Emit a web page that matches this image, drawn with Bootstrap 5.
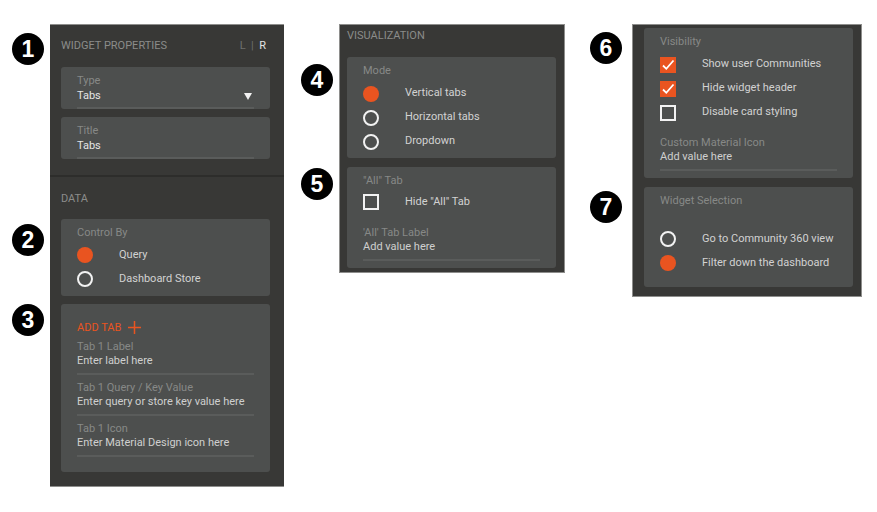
<!DOCTYPE html>
<html lang="en">
<head>
  <meta charset="UTF-8">
  <title>Tabs widget properties</title>
  <link href="https://cdn.jsdelivr.net/npm/bootstrap@5.3.0/dist/css/bootstrap.min.css" rel="stylesheet">
  <style>
    body {
      background: #fff;
      font-family: Roboto, "Liberation Sans", sans-serif;
      font-size: 11px;
      line-height: 14px;
    }
    .sheet {
      padding: 24px 0 0 50px;
    }
    .side-panel {
      background: #383836;
      box-shadow: inset 0 0 0 1px #8e8e8c;
      flex: none;
    }
    .panel-one {
      width: 234px;
      padding: 15px 14px 15px 11px;
      margin-right: 55px;
      box-shadow: inset 0 1px 0 #8e8e8c, inset 0 -1px 0 #8e8e8c;
    }
    .panel-two { width: 226px; padding: 5px 9px 5px 8px; margin-right: 67px; }
    .panel-three { width: 230px; padding: 4px 9px 10px 12px; }
    .panel-head {
      color: #8b8c8a;
      margin-bottom: 14px;
    }
    .data-head { margin-bottom: 13px; }
    .side-switch { color: #6f706e; padding-right: 4px; }
    .side-switch b { color: #e2e2e2; font-weight: 400; }
    .panel-rule {
      height: 2px;
      background: #2d2d2b;
      margin: 16px -14px 15px -11px;
    }
    .prop-card {
      position: relative;
      background: #4d4f4e;
      border-radius: 3px;
      padding: 7px 16px;
      margin-bottom: 9px;
    }
    .prop-card:last-child { margin-bottom: 0; }
    .tight { padding-bottom: 0; margin-bottom: 8px; }
    .control-card { padding-bottom: 5px; margin-bottom: 8px; }
    .mode-card { padding-bottom: 5px; }
    .tabs-card { padding-bottom: 15px; }
    .select-card { padding-bottom: 12px; }
    .prop-label { color: #878987; }
    .prop-value { color: #cfcfcf; }
    .prop-field {
      border-bottom: 2px solid #5a5c5b;
      padding-bottom: 5px;
      position: relative;
    }
    .prop-field + .prop-field { margin-top: 6px; }
    .tight .prop-field { padding-bottom: 4px; }
    .tight .prop-value { color: #e4e4e4; padding-top: 1px; }
    .opt-list { margin-top: 3px; }
    .list-near { margin-top: 2px; }
    .list-gap { margin-top: 19px; }
    .gap-after { margin-top: 12px; }
    .opt-row { height: 24px; color: #d2d2d2; }
    .opt-mark { width: 16px; height: 16px; margin-right: 26px; flex: none; display: block; }
    .mark-low .opt-mark { margin-top: 2px; }
    .caret-down {
      position: absolute;
      right: 2px;
      top: 19px;
      width: 0;
      height: 0;
      border: 4px solid transparent;
      border-top: 7px solid #f2f2f2;
      border-bottom: 0;
    }
    .add-tab {
      color: #e95420;
      height: 29px;
      padding-top: 10px;
    }
    .add-tab svg { margin-left: 7px; }
    .num-dot {
      position: absolute;
      width: 32px;
      height: 32px;
      border-radius: 50%;
      background: #000;
      color: #fff;
      font-family: "Liberation Sans", Arial, sans-serif;
      font-weight: 700;
      font-size: 23px;
      line-height: 32px;
      text-align: center;
    }
    .dot-left { left: -49px; }
    .dot-mid { left: -46px; }
    .dot-right { left: -54px; }
    .dot-1 { top: -34px; }
    .dot-2 { top: 5px; }
    .dot-3 { top: 0; }
    .dot-4 { top: 7px; }
    .dot-5 { top: 1px; }
    .dot-6, .dot-7 { top: 4px; }
  </style>
</head>
<body>

<div class="sheet d-flex align-items-start">

  <!-- left panel -->
  <div class="side-panel panel-one">
    <div class="panel-head d-flex justify-content-between">
      <span>WIDGET PROPERTIES</span>
      <span class="side-switch">L &nbsp;|&nbsp; <b>R</b></span>
    </div>
    <div class="prop-card tight">
      <span class="num-dot dot-left dot-1">1</span>
      <div class="prop-field">
        <div class="prop-label">Type</div>
        <div class="prop-value">Tabs</div>
        <span class="caret-down"></span>
      </div>
    </div>
    <div class="prop-card tight mb-0">
      <div class="prop-field">
        <div class="prop-label">Title</div>
        <div class="prop-value">Tabs</div>
      </div>
    </div>
    <div class="panel-rule"></div>
    <div class="panel-head data-head">DATA</div>
    <div class="prop-card control-card">
      <span class="num-dot dot-left dot-2">2</span>
      <div class="prop-label">Control By</div>
      <div class="opt-list">
        <div class="opt-row d-flex align-items-center">
          <svg class="opt-mark" viewBox="0 0 16 16"><circle cx="8" cy="8" r="8" fill="#e95420"/></svg>Query
        </div>
        <div class="opt-row d-flex align-items-center">
          <svg class="opt-mark" viewBox="0 0 16 16"><circle cx="8" cy="8" r="7" fill="none" stroke="#f2f2f2" stroke-width="2"/></svg>Dashboard Store
        </div>
      </div>
    </div>
    <div class="prop-card tabs-card">
      <span class="num-dot dot-left dot-3">3</span>
      <div class="add-tab d-flex align-items-start">ADD TAB
        <svg width="13" height="13" viewBox="0 0 13 13"><path d="M6.5 0v13M0 6.5h13" stroke="#e95420" stroke-width="1.5" fill="none"/></svg>
      </div>
      <div class="prop-field">
        <div class="prop-label">Tab 1 Label</div>
        <div class="prop-value">Enter label here</div>
      </div>
      <div class="prop-field">
        <div class="prop-label">Tab 1 Query / Key Value</div>
        <div class="prop-value">Enter query or store key value here</div>
      </div>
      <div class="prop-field">
        <div class="prop-label">Tab 1 Icon</div>
        <div class="prop-value">Enter Material Design icon here</div>
      </div>
    </div>
  </div>

  <!-- middle panel -->
  <div class="side-panel panel-two">
    <div class="panel-head">VISUALIZATION</div>
    <div class="prop-card mode-card">
      <span class="num-dot dot-mid dot-4">4</span>
      <div class="prop-label">Mode</div>
      <div class="opt-list mark-low">
        <div class="opt-row d-flex align-items-center">
          <svg class="opt-mark" viewBox="0 0 16 16"><circle cx="8" cy="8" r="8" fill="#e95420"/></svg>Vertical tabs
        </div>
        <div class="opt-row d-flex align-items-center">
          <svg class="opt-mark" viewBox="0 0 16 16"><circle cx="8" cy="8" r="7" fill="none" stroke="#f2f2f2" stroke-width="2"/></svg>Horizontal tabs
        </div>
        <div class="opt-row d-flex align-items-center">
          <svg class="opt-mark" viewBox="0 0 16 16"><circle cx="8" cy="8" r="7" fill="none" stroke="#f2f2f2" stroke-width="2"/></svg>Dropdown
        </div>
      </div>
    </div>
    <div class="prop-card">
      <span class="num-dot dot-mid dot-5">5</span>
      <div class="prop-label">"All" Tab</div>
      <div class="opt-list list-near">
        <div class="opt-row d-flex align-items-center">
          <svg class="opt-mark" viewBox="0 0 16 16"><rect x="1" y="1" width="14" height="14" fill="none" stroke="#f2f2f2" stroke-width="2"/></svg>Hide "All" Tab
        </div>
      </div>
      <div class="prop-field gap-after">
        <div class="prop-label">'All' Tab Label</div>
        <div class="prop-value">Add value here</div>
      </div>
    </div>
  </div>

  <!-- right panel -->
  <div class="side-panel panel-three">
    <div class="prop-card">
      <span class="num-dot dot-right dot-6">6</span>
      <div class="prop-label">Visibility</div>
      <div class="opt-list mark-low">
        <div class="opt-row d-flex align-items-center">
          <svg class="opt-mark" viewBox="0 0 16 16"><rect width="16" height="16" fill="#e95420"/><path d="M3 8.5l3.3 3.3L13.5 3.5" fill="none" stroke="#fff" stroke-width="1.8"/></svg>Show user Communities
        </div>
        <div class="opt-row d-flex align-items-center">
          <svg class="opt-mark" viewBox="0 0 16 16"><rect width="16" height="16" fill="#e95420"/><path d="M3 8.5l3.3 3.3L13.5 3.5" fill="none" stroke="#fff" stroke-width="1.8"/></svg>Hide widget header
        </div>
        <div class="opt-row d-flex align-items-center">
          <svg class="opt-mark" viewBox="0 0 16 16"><rect x="1" y="1" width="14" height="14" fill="none" stroke="#f2f2f2" stroke-width="2"/></svg>Disable card styling
        </div>
      </div>
      <div class="prop-field gap-after">
        <div class="prop-label">Custom Material Icon</div>
        <div class="prop-value">Add value here</div>
      </div>
    </div>
    <div class="prop-card select-card">
      <span class="num-dot dot-right dot-7">7</span>
      <div class="prop-label">Widget Selection</div>
      <div class="opt-list list-gap">
        <div class="opt-row d-flex align-items-center">
          <svg class="opt-mark" viewBox="0 0 16 16"><circle cx="8" cy="8" r="7" fill="none" stroke="#f2f2f2" stroke-width="2"/></svg>Go to Community 360 view
        </div>
        <div class="opt-row d-flex align-items-center">
          <svg class="opt-mark" viewBox="0 0 16 16"><circle cx="8" cy="8" r="8" fill="#e95420"/></svg>Filter down the dashboard
        </div>
      </div>
    </div>
  </div>

</div>

</body>
</html>
